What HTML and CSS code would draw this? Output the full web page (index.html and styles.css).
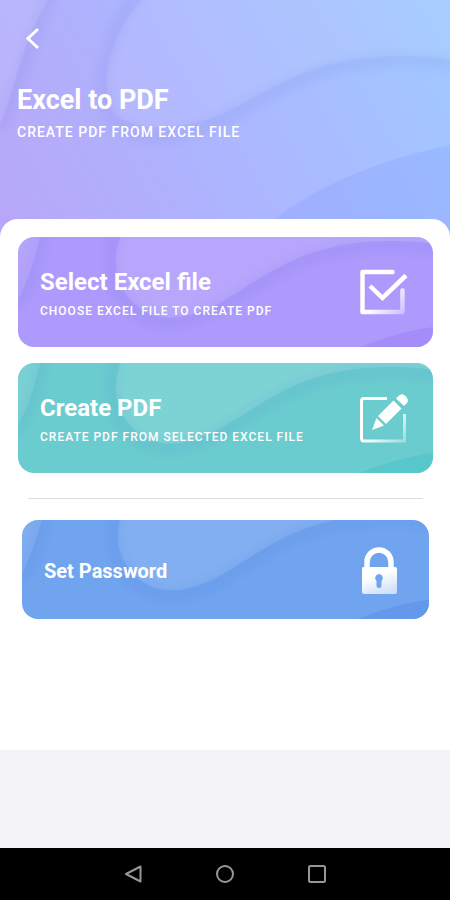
FILE: index.html
```html
<!DOCTYPE html>
<html lang="en">
<head>
  <meta charset="UTF-8">
  <title>Excel to PDF</title>
  <meta name="viewport" content="width=device-width, initial-scale=1.0">
  <link rel="stylesheet" href="styles.css">
</head>
<body>
  <!-- shared wave shapes for the cards -->
  <svg class="defs" width="0" height="0" aria-hidden="true">
    <defs>
      <linearGradient id="fade" gradientUnits="userSpaceOnUse" x1="20" y1="20" x2="50" y2="50">
        <stop offset="0.3" stop-color="#fff"/>
        <stop offset="1" stop-color="#fff" stop-opacity="0.3"/>
      </linearGradient>
      <linearGradient id="lockFade" x1="0.3" y1="0" x2="0.7" y2="1">
        <stop offset="0.3" stop-color="#fff"/>
        <stop offset="1" stop-color="#fff" stop-opacity="0.65"/>
      </linearGradient>
      <filter id="soft" x="-20%" y="-20%" width="140%" height="140%">
        <feGaussianBlur stdDeviation="5"/>
      </filter>
      <symbol id="waves" viewBox="0 0 415 110" preserveAspectRatio="xMidYMax slice">
        <path d="M24 -6C18 32 10 50 -2 68M98 -6C88 36 98 58 114 71C136 93 172 87 205 68C258 36 290 8 375 8C390 8 405 9 430 13" fill="none" stroke="#203cc0" stroke-width="12" opacity="0.05" filter="url(#soft)"/>
        <path d="M0 0H22C16 28 8 46 0 64Z" fill="#fff" opacity="0.1"/>
        <path d="M102 0C92 34 102 54 117 67C138 88 172 83 205 64C258 32 290 4 375 4C390 4 405 5 415 7V0Z" fill="#fff" opacity="0.12"/>
        <path class="corner" d="M342 110C360 103 382 95 415 90V110Z"/>
      </symbol>
    </defs>
  </svg>

  <header class="header">
    <svg class="waves" viewBox="0 0 450 240" preserveAspectRatio="none" aria-hidden="true">
      <path d="M52 -10C22 54 19 94 -2 128M138 -10C108 38 94 82 109 114C126 144 176 140 220 121C270 96 310 60 400 60C420 60 436 61 470 66" fill="none" stroke="#4a58c8" stroke-width="14" opacity="0.08" filter="url(#soft)"/>
      <path d="M0 0H48C18 50 16 90 0 124Z" fill="#fff" opacity="0.1"/>
      <path d="M142 0C112 34 98 78 112 110C128 132 176 132 220 115C270 92 310 56 400 56C420 56 436 57 450 60V0Z" fill="#fff" opacity="0.08"/>
      <path d="M275 219C320 184 380 160 450 145V240H250Z" fill="#6688ff" opacity="0.17"/>
    </svg>
    <button class="back" aria-label="Back">
      <svg width="32" height="32" viewBox="0 0 32 32"><path d="M21 7L11 16.500L21 26" fill="none" stroke="#fff" stroke-width="3"/></svg>
    </button>
    <h1>Excel to PDF</h1>
    <p class="subtitle">CREATE PDF FROM EXCEL FILE</p>
  </header>

  <main class="sheet">
    <button class="card purple">
      <svg class="waves" aria-hidden="true"><use href="#waves"/></svg>
      <span class="text">
        <span class="title">Select Excel file</span>
        <span class="desc">CHOOSE EXCEL FILE TO CREATE PDF</span>
      </span>
      <svg class="icon" viewBox="0 0 56 56" aria-hidden="true">
        <path d="M36.500 7H6.500V47H46.500V25.500" fill="none" stroke="url(#fade)" stroke-width="4.500" stroke-linecap="round" stroke-linejoin="round"/>
        <path d="M14 21L26.500 33L50 10.500" fill="none" stroke="#fff" stroke-width="4.500"/>
      </svg>
    </button>

    <button class="card teal">
      <svg class="waves" aria-hidden="true"><use href="#waves"/></svg>
      <span class="text">
        <span class="title">Create PDF</span>
        <span class="desc">CREATE PDF FROM SELECTED EXCEL FILE</span>
      </span>
      <svg class="icon" viewBox="0 0 56 56" aria-hidden="true">
        <path d="M31 7.500H8Q5.500 7.500 5.500 10V47Q5.500 50 8 50H48.500V23" fill="none" stroke="url(#fade)" stroke-width="3"/>
        <path d="M16 39L20.500 27L28 34.500Z" fill="#fff"/>
        <path d="M22 25L37.500 9.500L45.500 17.500L30 33Z" fill="#fff"/>
        <path d="M40 7.500L42.500 5Q46 1.500 50 5.500Q53.500 9.500 50.500 12.500L48 15Z" fill="#fff"/>
      </svg>
    </button>

    <hr class="divider">

    <button class="card small blue">
      <svg class="waves" aria-hidden="true"><use href="#waves"/></svg>
      <span class="text">
        <span class="title">Set Password</span>
      </span>
      <svg class="icon" viewBox="0 0 56 56" aria-hidden="true">
        <path d="M15 27V19A12 12 0 0 1 39 19V27" fill="none" stroke="#fff" stroke-width="5.500"/>
        <path fill-rule="evenodd" d="M11 24H43Q45 24 45 26V49Q45 51 43 51H12Q10 51 10 49V26Q10 24 11 24ZM27 31A4 4 0 0 0 24.500 38V43Q24.500 45 27 45T29.500 43V38A4 4 0 0 0 27 31Z" fill="url(#lockFade)"/>
      </svg>
    </button>
  </main>

  <nav class="navbar">
    <button aria-label="Back"><svg width="24" height="24" viewBox="0 0 24 24"><path d="M19.500 4.500V19.500L5 12Z"/></svg></button>
    <button aria-label="Home"><svg width="24" height="24" viewBox="0 0 24 24"><circle cx="12" cy="12" r="8"/></svg></button>
    <button aria-label="Recent apps"><svg width="24" height="24" viewBox="0 0 24 24"><rect x="4" y="4" width="16" height="16" rx="1.500"/></svg></button>
  </nav>
</body>
</html>
```

FILE: styles.css
```css
* { box-sizing: border-box; }
body {
  margin: 0; min-height: 100vh;
  display: flex; flex-direction: column;
  background: #f3f3f6; font-family: Roboto, sans-serif; color: #fff;
}
button { border: none; background: none; padding: 0; font: inherit; color: inherit; cursor: pointer; }
.defs { position: absolute; }
.waves { position: absolute; top: 0; left: 0; width: 100%; height: 100%; }

.header {
  position: relative; overflow: hidden;
  padding: 22px 17px 99px;
  background: linear-gradient(60deg, #b8a6f8 0%, #adb5ff 45%, #a0caff 100%);
}
.back { position: relative; display: block; height: 32px; }
h1 { position: relative; margin: 29px 0 0; font-size: 27px; line-height: 34px; font-weight: 700; }
.subtitle { position: relative; margin: 6px 0 0; font-size: 14px; line-height: 18px; font-weight: 500; letter-spacing: 1px; }

.sheet {
  position: relative; margin-top: -21px; padding: 18px 17px 131px 18px;
  display: flex; flex-direction: column; gap: 16px;
  background: #fff; border-radius: 18px 18px 0 0;
}
.card {
  position: relative; overflow: hidden;
  display: flex; align-items: center; justify-content: space-between;
  height: 110px; padding: 2px 21px 0 22px; border-radius: 16px; text-align: left;
}
.purple { background: #ad9afc; }
.purple .waves { color: #9c80fa; }
.teal { background: #6bcccf; }
.teal .waves { color: #43c2c8; }
.blue { background: #70a4ef; }
.blue .waves { color: #568ce6; }
.corner { fill: currentColor; opacity: 0.5; }
.text { position: relative; display: flex; flex-direction: column; gap: 6px; }
.title { font-size: 24px; line-height: 30px; font-weight: 700; }
.desc { font-size: 12px; line-height: 16px; font-weight: 500; letter-spacing: 1px; }
.icon { position: relative; width: 56px; height: 56px; }
.divider { width: calc(100% - 20px); margin: 9px auto 5px; border: none; border-top: 1px solid #d9dce4; }
.small { height: 99px; margin: 0 4px; }
.small .title { font-size: 20px; line-height: 24px; }

.navbar {
  margin-top: auto; height: 52px; background: #000;
  display: flex; justify-content: center; align-items: center; gap: 68px;
}
.navbar button { height: 24px; }
.navbar svg { fill: none; stroke: #979797; stroke-width: 2; stroke-linejoin: round; }
```
